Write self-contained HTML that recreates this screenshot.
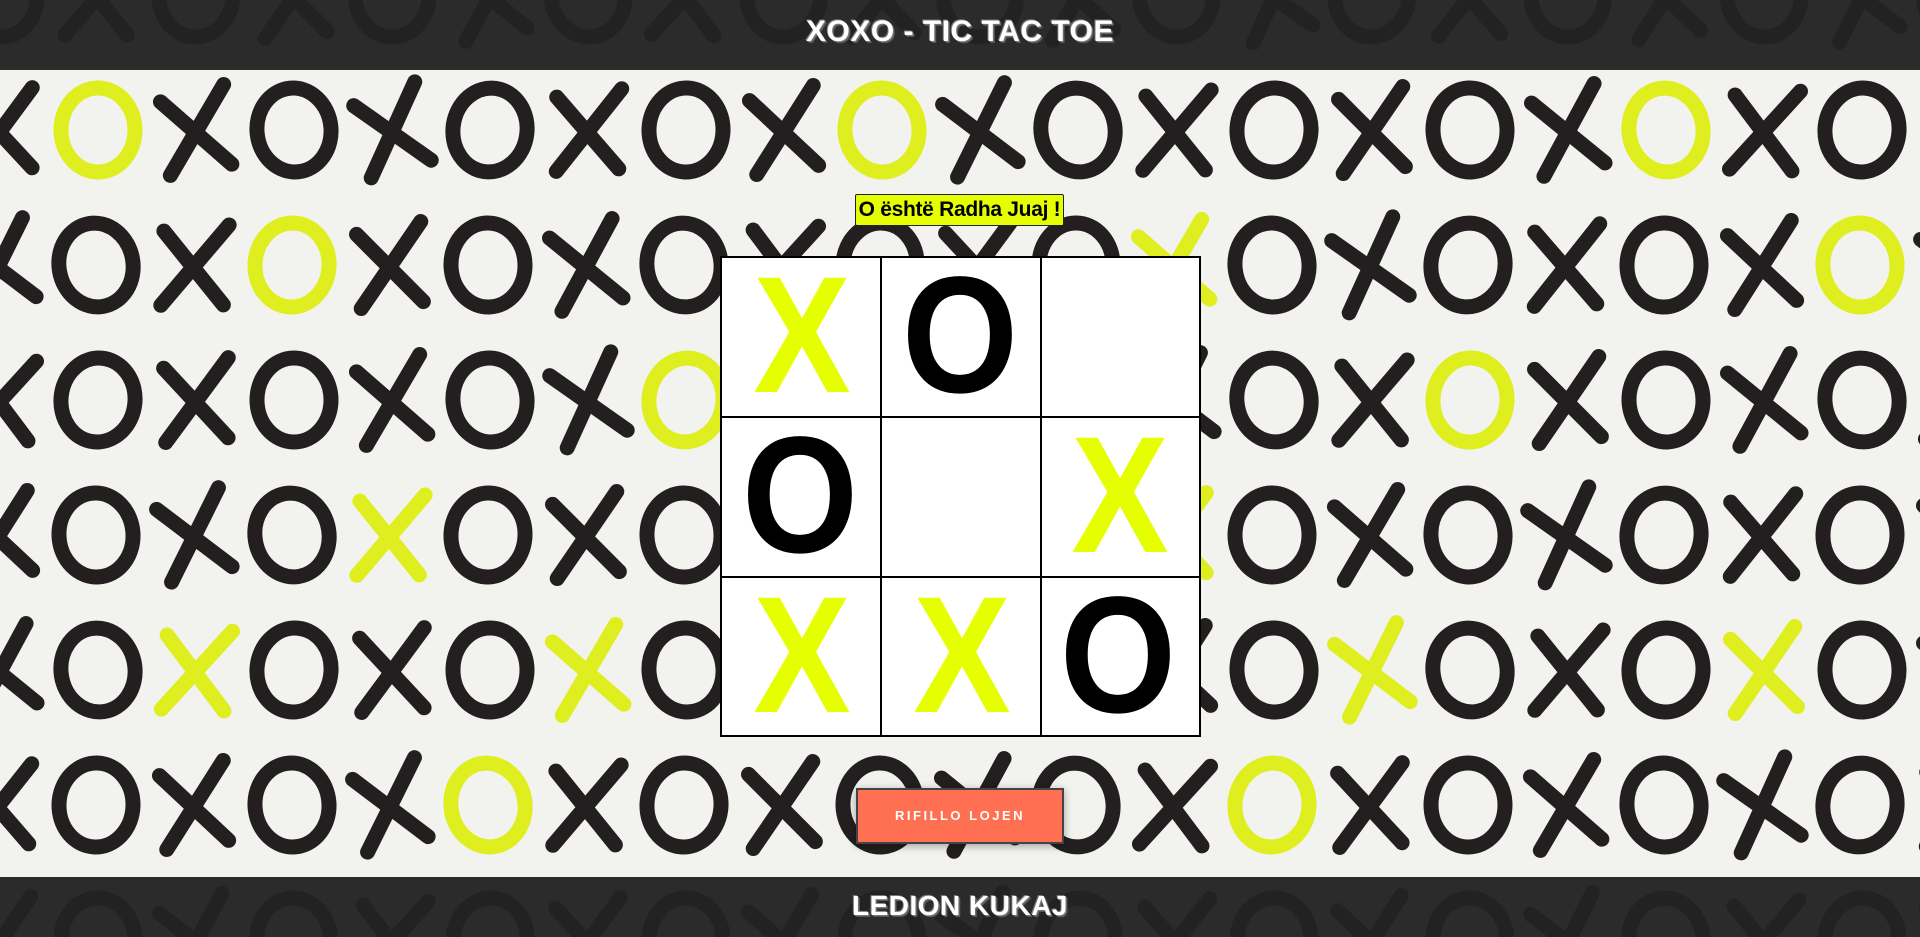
<!DOCTYPE html>
<html><head><meta charset="utf-8"><style>
html,body{margin:0;padding:0;width:1920px;height:937px;overflow:hidden;background:#f2f2ee;font-family:"Liberation Sans",sans-serif;position:relative}
#bg{position:absolute;left:0;top:0;display:block}
.bar{position:absolute;left:0;width:1920px;background:rgba(34,34,34,0.96);}
.bar .t{position:absolute;left:0;width:100%;text-align:center;color:#fff;font-weight:bold;letter-spacing:0.5px;
text-shadow:-1px -1px 0 #777,1px 1px 0 #777,2px 2px 0 #555;}
#status{position:absolute;left:855px;top:194px;width:207px;height:30px;background:#e5ff00;border:1px solid #222;border-radius:2px;
font-weight:bold;font-size:21px;line-height:30px;text-align:center;color:#000;letter-spacing:-0.3px}
#board{position:absolute;left:720px;top:256px;width:481px;height:481px;background:#fff}
.ln{position:absolute;background:#000}
.p{position:absolute;width:160px;text-align:center;font-weight:bold;font-size:166px;line-height:166px;}
.x{color:#e5ff00;transform:scaleX(0.88)}
.o{color:#000;transform:scaleX(0.9)}
#btn{position:absolute;left:856px;top:788px;width:204px;height:52px;background:#ff7053;border:2px solid #444;
box-shadow:0 2px 8px rgba(0,0,0,0.35);color:#fff;font-weight:bold;font-size:13px;letter-spacing:2.5px;text-align:center;line-height:52px}
</style></head><body>
<svg id="bg" width="1920" height="937" xmlns="http://www.w3.org/2000/svg"></svg>
<div class="bar" style="top:0;height:70px"><div class="t" style="top:15px;font-size:30px">XOXO - TIC TAC TOE</div></div>
<div class="bar" style="top:877px;height:60px"><div class="t" style="top:13px;font-size:28px">LEDION KUKAJ</div></div>
<div id="status">O është Radha Juaj !</div>
<div id="board">
<div class="ln" style="left:0;top:0;width:481px;height:2px"></div>
<div class="ln" style="left:0;top:160px;width:481px;height:2px"></div>
<div class="ln" style="left:0;top:320px;width:481px;height:2px"></div>
<div class="ln" style="left:0;top:479px;width:481px;height:2px"></div>
<div class="ln" style="left:0;top:0;width:2px;height:481px"></div>
<div class="ln" style="left:160px;top:0;width:2px;height:481px"></div>
<div class="ln" style="left:320px;top:0;width:2px;height:481px"></div>
<div class="ln" style="left:479px;top:0;width:2px;height:481px"></div>
<div class="p x" style="left:2px;top:-3px">X</div>
<div class="p o" style="left:160px;top:-3px">O</div>
<div class="p o" style="left:0px;top:157px">O</div>
<div class="p x" style="left:320px;top:157px">X</div>
<div class="p x" style="left:2px;top:317px">X</div>
<div class="p x" style="left:162px;top:317px">X</div>
<div class="p o" style="left:318px;top:317px">O</div>
</div>
<div id="btn">RIFILLO LOJEN</div>
<script>
var svg=document.getElementById('bg'),h='';
var rows=[[-5,0],[130,0],[265,-100],[400,0],[535,-100],[670,0],[805,-100],[940,0]];
var yel=[[],[100,900,1700],[300,1140,1880],[680,1500],[400,1215],[200,600,1400,1800],[525,1305],[]];
for(var r=0;r<rows.length;r++){var y=rows[r][0];
 for(var k=0;k<22;k++){var x=rows[r][1]+k*98;var isX=((k+r)%2==1);
  var c='#231f20';for(var j=0;j<yel[r].length;j++){if(Math.abs(yel[r][j]-x)<50)c='#dfee1e';}
  var rot=((k*37+r*13)%20)-10;
  if(isX){h+='<g transform="translate('+x+','+y+') rotate('+rot+')" stroke="'+c+'" stroke-width="15" stroke-linecap="round"><line x1="-34" y1="-30" x2="34" y2="36"/><line x1="30" y1="-44" x2="-28" y2="44"/></g>';}
  else{h+='<ellipse cx="'+x+'" cy="'+y+'" rx="37" ry="42" transform="rotate('+rot+' '+x+' '+y+')" fill="none" stroke="'+c+'" stroke-width="15"/>';}
 }}
svg.innerHTML=h;
</script>
</body></html>
